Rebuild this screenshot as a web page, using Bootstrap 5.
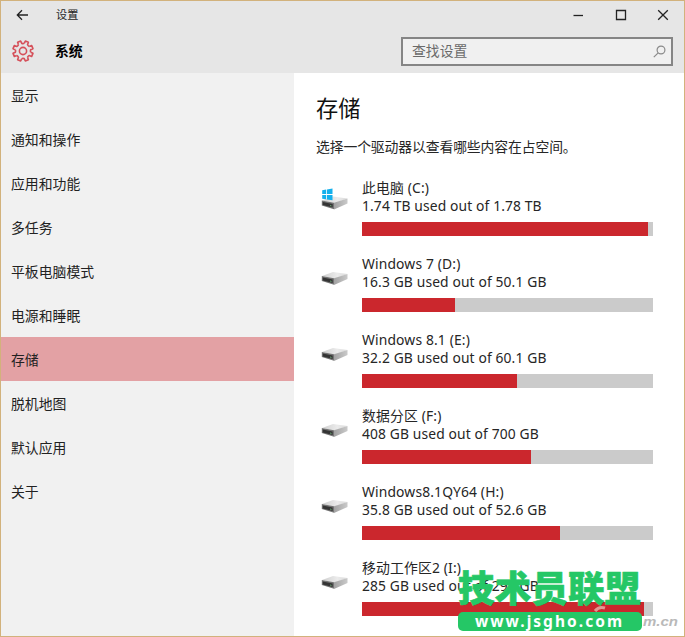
<!DOCTYPE html>
<html lang="zh-CN">
<head>
<meta charset="utf-8">
<meta name="viewport" content="width=device-width, initial-scale=1">
<title>设置</title>
<link href="https://cdn.jsdelivr.net/npm/bootstrap@5.3.0/dist/css/bootstrap.min.css" rel="stylesheet">
<style>
  body { font-family: "Noto Sans", "Noto Sans CJK SC", sans-serif; font-size: 13.85px; line-height: 18px; color: #262626; }
  .app-window { width: 685px; height: 637px; border: 1px solid #d2b27c; background: #fff; }
  .app-top { height: 72px; background: #e6e6e6; flex: none; }
  .title-bar { height: 27px; padding-left: 15px; font-size: 11.2px; }
  .title-bar svg, .drive-icon, .gear-icon { display: block; flex: none; }
  .title-text { margin-left: 27px; }
  .caption-btns { gap: 28px; padding-right: 14px; }
  .page-bar { height: 45px; padding-left: 10px; padding-right: 11px; }
  .page-name { margin-left: 20px; padding-top: 1px; color: #000; }
  .search-box { width: 272px; height: 29px; margin-top: 1px; border: 2px solid #858585; background: #f0f0f0; padding: 0 5px 0 9px; color: #6a6a6a; }
  .side-menu { width: 293px; background: #f1f1f1; flex: none; }
  .side-menu .nav-link { height: 44px; padding: 1px 10px 0; color: #222; display: flex; align-items: center; }
  .side-menu .nav-link.active { background: #e3a1a4; }
  .main-pane { padding: 21px 31px 0 22px; }
  .main-title { font-size: 22.2px; line-height: 30px; color: #111; margin-bottom: 14px; }
  .main-hint { margin-bottom: 23px; white-space: nowrap; letter-spacing: -.13px; }
  .drive { height: 76px; }
  .drive-icon { margin: 7px 12px 0 5px; }
  .drive-info { width: 291px; white-space: nowrap; letter-spacing: .15px; }
  .drive-info .usage { letter-spacing: .12px; }
  .drive .progress { height: 14px; margin-top: 7px; border-radius: 0; background: #cbcbcb; }
  .drive .progress-bar { background: #cb272d; transition: none; }
  .stamp { left: 457px; top: 568px; width: 226px; height: 66px; }
</style>
</head>
<body>
<svg width="0" height="0" class="position-absolute" aria-hidden="true">
  <defs>
    <linearGradient id="discTop" x1="0" y1="0" x2="1" y2="0"><stop offset="0" stop-color="#cfcfcf"/><stop offset=".6" stop-color="#ebebeb"/><stop offset="1" stop-color="#dadada"/></linearGradient>
    <linearGradient id="discSide" x1="0" y1="0" x2="1" y2="0"><stop offset="0" stop-color="#a2a2a2"/><stop offset="1" stop-color="#cacaca"/></linearGradient>
    <g id="disc">
      <path d="M1 16 12 12 26.5 14 14 18.5Z" fill="url(#discTop)"/>
      <path d="M13 18.3 26.5 14V19L13 25Z" fill="url(#discSide)"/>
      <path d="M.8 15.9 13 18.3V24.8L.8 21Z" fill="#747474"/>
      <path d="M1.8 17.4 11.7 19.5V23L1.8 20.4Z" fill="#343434"/>
      <path d="M9 20.5l1.5.4v1L9 21.5Z" fill="#65a36e"/>
    </g>
    <path id="tooth" d="M-1.8-7.5-1.65-10.1H1.65L1.8-7.5Q2.9-6.5 4.03-6.58"/>
  </defs>
</svg>
<div class="app-window d-flex flex-column position-relative overflow-hidden">
  <header class="app-top">
    <div class="title-bar d-flex align-items-center">
      <svg width="13" height="12" viewBox="0 0 13 12" fill="none" stroke="#222" stroke-width="1.3"><path d="M12 6H1.5M6 1.3 1.3 6 6 10.7"/></svg>
      <span class="title-text">设置</span>
      <div class="caption-btns d-flex align-items-center ms-auto">
        <svg width="14" height="14" viewBox="0 0 14 14"><path d="M1.5 7.5H11" stroke="#222" stroke-width="1.3"/></svg>
        <svg width="14" height="14" viewBox="0 0 14 14"><path d="M2.5 2.5h9v9h-9Z" stroke="#222" stroke-width="1.3" fill="none"/></svg>
        <svg width="14" height="14" viewBox="0 0 14 14"><path d="M2.2 2.2 11.8 11.8M11.8 2.2 2.2 11.8" stroke="#222" stroke-width="1.3"/></svg>
      </div>
    </div>
    <div class="page-bar d-flex align-items-center">
      <svg class="gear-icon" width="24" height="24" viewBox="-12 -12 24 24" fill="none" stroke="#d5505a" stroke-width="1.6" stroke-linejoin="round">
        <g transform="rotate(22.5)">
          <use href="#tooth"/><use href="#tooth" transform="rotate(45)"/><use href="#tooth" transform="rotate(90)"/><use href="#tooth" transform="rotate(135)"/>
          <use href="#tooth" transform="rotate(180)"/><use href="#tooth" transform="rotate(225)"/><use href="#tooth" transform="rotate(270)"/><use href="#tooth" transform="rotate(315)"/>
        </g>
        <circle r="3.6"/>
      </svg>
      <span class="page-name fw-bold">系统</span>
      <div class="search-box d-flex align-items-center justify-content-between ms-auto">
        <span>查找设置</span>
        <svg width="13" height="13" viewBox="0 0 13 13" fill="none" stroke="#8a8a8a" stroke-width="1.2"><circle cx="8" cy="5" r="3.9"/><path d="M5.2 7.8.8 12.2"/></svg>
      </div>
    </div>
  </header>
  <div class="d-flex flex-grow-1">
    <nav class="side-menu nav flex-column flex-nowrap">
      <a class="nav-link">显示</a>
      <a class="nav-link">通知和操作</a>
      <a class="nav-link">应用和功能</a>
      <a class="nav-link">多任务</a>
      <a class="nav-link">平板电脑模式</a>
      <a class="nav-link">电源和睡眠</a>
      <a class="nav-link active">存储</a>
      <a class="nav-link">脱机地图</a>
      <a class="nav-link">默认应用</a>
      <a class="nav-link">关于</a>
    </nav>
    <main class="main-pane flex-grow-1">
      <h1 class="main-title fw-normal">存储</h1>
      <p class="main-hint">选择一个驱动器以查看哪些内容在占空间。</p>
      <div class="drive d-flex">
        <svg class="drive-icon" width="29" height="28" viewBox="0 0 29 28"><use href="#disc" y="-1.5"/><path d="M1.2 4.2 5.2 3.6V8H1.2ZM6 3.5 11.5 2.6V8H6ZM1.2 8.9H5.2V13.3L1.2 12.7ZM6 8.9H11.5V14.3L6 13.4Z" fill="#14b0ec"/></svg>
        <div class="drive-info"><div>此电脑 (C:)</div><div class="usage">1.74 TB used out of 1.78 TB</div>
          <div class="progress"><div class="progress-bar" style="width:98.2%"></div></div></div>
      </div>
      <div class="drive d-flex">
        <svg class="drive-icon" width="29" height="28" viewBox="0 0 29 28"><use href="#disc" y="-2"/></svg>
        <div class="drive-info"><div>Windows 7 (D:)</div><div class="usage">16.3 GB used out of 50.1 GB</div>
          <div class="progress"><div class="progress-bar" style="width:32%"></div></div></div>
      </div>
      <div class="drive d-flex">
        <svg class="drive-icon" width="29" height="28" viewBox="0 0 29 28"><use href="#disc" y="-2"/></svg>
        <div class="drive-info"><div>Windows 8.1 (E:)</div><div class="usage">32.2 GB used out of 60.1 GB</div>
          <div class="progress"><div class="progress-bar" style="width:53.1%"></div></div></div>
      </div>
      <div class="drive d-flex">
        <svg class="drive-icon" width="29" height="28" viewBox="0 0 29 28"><use href="#disc" y="-2"/></svg>
        <div class="drive-info"><div>数据分区 (F:)</div><div class="usage">408 GB used out of 700 GB</div>
          <div class="progress"><div class="progress-bar" style="width:58.1%"></div></div></div>
      </div>
      <div class="drive d-flex">
        <svg class="drive-icon" width="29" height="28" viewBox="0 0 29 28"><use href="#disc" y="-2"/></svg>
        <div class="drive-info"><div>Windows8.1QY64 (H:)</div><div class="usage">35.8 GB used out of 52.6 GB</div>
          <div class="progress"><div class="progress-bar" style="width:68.1%"></div></div></div>
      </div>
      <div class="drive d-flex">
        <svg class="drive-icon" width="29" height="28" viewBox="0 0 29 28"><use href="#disc" y="-2"/></svg>
        <div class="drive-info"><div>移动工作区2 (I:)</div><div class="usage">285 GB used out of 292 GB</div>
          <div class="progress"><div class="progress-bar" style="width:97%"></div></div></div>
      </div>
    </main>
  </div>
  <svg class="stamp position-absolute" viewBox="458 569 226 66">
    <text x="643" y="625.5" font-family="Liberation Sans, sans-serif" font-size="13" font-weight="bold" font-style="italic" fill="#b9b9b9" textLength="35" lengthAdjust="spacingAndGlyphs">m.cn</text>
    <path d="M595 611Q599 606 605 608" stroke="#e39a94" stroke-width="3" fill="none"/>
    <text x="458" y="602" font-family="Noto Sans CJK SC, sans-serif" font-size="36.5" font-weight="900" fill="#25c766" stroke="#25c766" stroke-width=".6" stroke-linejoin="round" textLength="183">技术员联盟</text>
    <rect x="458" y="612" width="184" height="19" rx="5" fill="#25c766"/>
    <text x="475" y="626.5" font-family="Noto Sans, sans-serif" font-size="15.5" font-weight="bold" fill="#fff" textLength="147">www.jsgho.com</text>
  </svg>
</div>
<script src="https://cdn.jsdelivr.net/npm/bootstrap@5.3.0/dist/js/bootstrap.bundle.min.js"></script>
</body>
</html>
